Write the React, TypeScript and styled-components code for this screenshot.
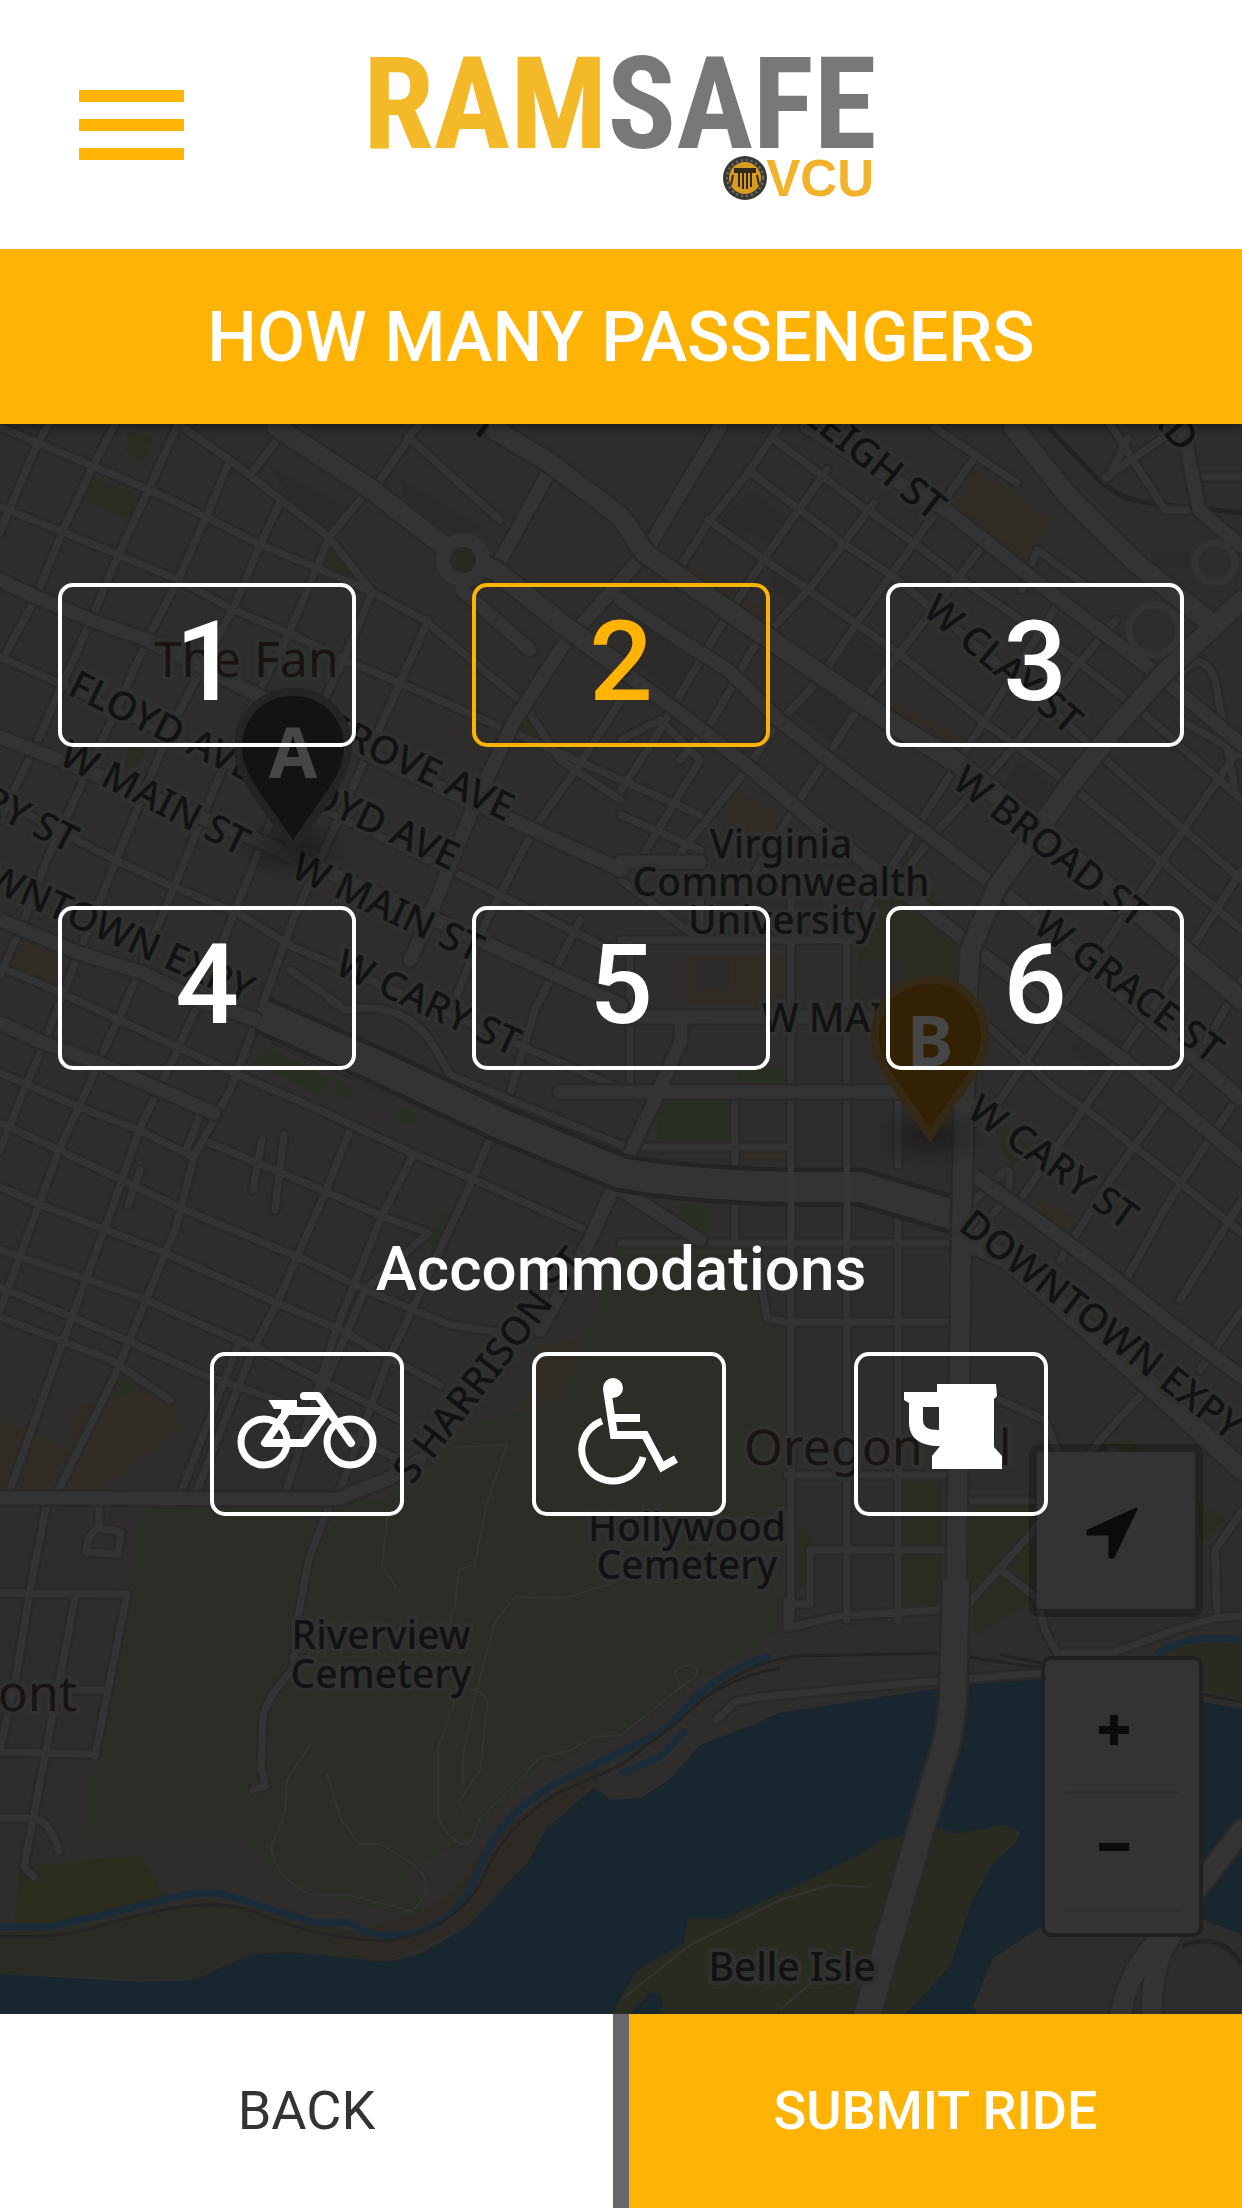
import React, { useState } from "react";
import styled, { createGlobalStyle } from "styled-components";

const amber = "#ffb305";
const sans = `Roboto, "Liberation Sans", sans-serif`;

const GlobalStyle = createGlobalStyle`
  *, *::before, *::after { box-sizing: border-box; }
  body { margin: 0; background: #fff; font-family: ${sans}; }
  button { font-family: inherit; cursor: pointer; }
`;

const Page = styled.div`
  display: flex;
  flex-direction: column;
  min-height: 100vh;
`;

const Header = styled.header`
  position: relative;
  z-index: 2;
  display: grid;
  grid-template-columns: 1fr auto 1fr;
  align-items: center;
  height: 249px;
  padding: 0 79px;
  background: #fff;
`;

const MenuButton = styled.button`
  display: flex;
  flex-direction: column;
  gap: 17px;
  width: 105px;
  padding: 0;
  border: 0;
  background: none;
`;

const MenuBar = styled.span`
  height: 12px;
  background: ${amber};
`;

const LogoArt = styled.svg`
  display: block;
  width: 504px;
  height: 152px;
  overflow: visible;
`;

const Banner = styled.div`
  position: relative;
  z-index: 1;
  display: flex;
  align-items: center;
  justify-content: center;
  height: 175px;
  background: ${amber};
  box-shadow: 0 2px 10px rgba(0, 0, 0, 0.45);
`;

const Title = styled.h1`
  margin: 0;
  color: #fff;
  font-size: 70px;
  font-weight: 500;
  line-height: 80px;
`;

const Main = styled.main`
  position: relative;
  flex: 1;
  padding: 159px 58px 80px;
  background: #2e2d2b;
  overflow: hidden;
`;

const MapLayer = styled.div`
  position: absolute;
  inset: 0;
  display: flex;
  flex-direction: column;
  align-items: flex-end;
  justify-content: flex-end;
  gap: 39px;
  padding: 0 39px 77px;
`;

const MapArt = styled.svg`
  position: absolute;
  inset: 0;
  width: 100%;
  height: 100%;
`;

const LocateButton = styled.button`
  position: relative;
  display: grid;
  place-items: center;
  width: 174px;
  height: 173px;
  padding: 4px 8px 0 0;
  border: 8px solid rgba(0, 0, 0, 0.22);
  border-radius: 10px;
  background: #333 padding-box;
`;

const ZoomGroup = styled.div`
  position: relative;
  display: flex;
  flex-direction: column;
  width: 162px;
  height: 281px;
  padding: 17px 20px;
  border: 4px solid #202020;
  border-radius: 10px;
  background: #333;
`;

const ZoomButton = styled.button`
  display: grid;
  place-items: center;
  height: 117px;
  padding: 0 16px 8px 0;
  border: 0;
  border-bottom: 3px solid #2f2f2f;
  background: none;
`;

const Options = styled.div`
  position: relative;
  display: grid;
  grid-template-columns: repeat(3, 1fr);
  gap: 159px 116px;
`;

const OutlineButton = styled.button<{ $active?: boolean }>`
  display: grid;
  place-items: center;
  height: 164px;
  padding: 0 0 6px;
  border: 4px solid ${(p) => (p.$active ? amber : "#fff")};
  border-radius: 15px;
  background: none;
  color: ${(p) => (p.$active ? amber : "#fff")};
  font-size: 112px;
  font-weight: 500;
  line-height: 120px;
`;

const SectionTitle = styled.h2`
  position: relative;
  margin: 163px 0 47px;
  color: #fff;
  font-size: 62px;
  font-weight: 500;
  line-height: 72px;
  text-align: center;
`;

const Accommodations = styled.div`
  position: relative;
  display: grid;
  grid-template-columns: repeat(3, 194px);
  justify-content: center;
  gap: 128px;
  padding-left: 15px;
`;

const Glyph = styled.svg`
  display: block;
  width: 140px;
  height: 108px;
  fill: none;
  stroke: currentColor;
  stroke-width: 7;
`;

const Footer = styled.footer`
  display: grid;
  grid-template-columns: 1fr 1fr;
  gap: 16px;
  height: 194px;
  background: #66686b;
`;

const FooterButton = styled.button<{ $primary?: boolean }>`
  padding: 0;
  border: 0;
  background: ${(p) => (p.$primary ? amber : "#fff")};
  color: ${(p) => (p.$primary ? "#fff" : "#333")};
  font-size: 54px;
  font-weight: ${(p) => (p.$primary ? 500 : 400)};
  line-height: 64px;
`;

function Logo() {
  return (
    <LogoArt viewBox="0 0 504 152" role="img" aria-label="RamSafe at VCU">
      <text
        x="-6"
        y="99"
        fontFamily="'Roboto Condensed', 'Liberation Sans', sans-serif"
        fontWeight="700"
        fontSize="128"
      >
        <tspan fill="#f3b929">RAM</tspan><tspan fill="#787876">SAFE</tspan>
      </text>
      <circle cx="376" cy="129" r="22" fill="#393935" />
      <circle cx="376" cy="129" r="18" fill="none" stroke="#77736a" strokeWidth="2" strokeDasharray="2 3" />
      <circle cx="376" cy="129" r="16" fill="#d99c22" />
      <path d="M366 120h20v3h-20zM370 124v14M374 124v16M378 124v16M382 124v14M364 126l-2 10M388 126l2 10" stroke="#33291a" strokeWidth="2" fill="#33291a" />
      <text x="505" y="147" textAnchor="end" fill="#f2b22b" fontFamily="'Liberation Sans', sans-serif" fontWeight="700" fontSize="51">VCU</text>
    </LogoArt>
  );
}

const narrowStreets = [
  "M0 427L36 442 95 467 150 490 206 517 261 545 317 568 372 592 424 620 475 663 523 703 560 760 621 800",
  "M0 507L63 532 119 555 178 580 234 610 289 633 345 660 400 683 455 707 507 730 621 780 700 815",
  "M0 657L59 683 240 770 470 880 621 955",
  "M0 800L71 837 115 860 174 887 238 913 293 947 340 967 531 1050 640 1097",
  "M51 420L36 447 12 503 0 533",
  "M115 424L91 470 63 530 36 597 4 657",
  "M178 424L150 487 119 553 91 620 63 683 32 753 0 820",
  "M178 424L230 460 281 500 329 537 372 592",
  "M230 460L206 517 178 580 147 640 115 713 79 790 48 857 20 930 0 975",
  "M277 440L250 475M408 440L372 492M408 437L500 520M408 437L420 424",
  "M281 500L261 543 234 607 202 667 170 730 115 863 79 953 44 1043 20 1100 0 1150",
  "M360 500L329 537 317 567 289 633 253 703 222 770 174 887 140 970 79 1107 59 1150 0 1310",
  "M372 593L345 657 301 747 238 903 200 1000 175 1055 139 1130 115 1200 60 1350 10 1490",
  "M428 620L400 683 356 780 293 920 257 1020 230 1090 194 1157 175 1230 115 1375 55 1497",
  "M621 700L578 767 535 827 487 920 455 1000M580 920L535 1010 511 1090 471 1183 412 1310 388 1360 340 1490",
  "M0 967L55 990 119 1020 234 1073 313 1107 412 1153 475 1180 586 1230",
  "M0 1073L79 1107 139 1130 194 1157M210 1143L329 1193 384 1217 428 1233",
  "M0 1123L59 1150 178 1207 305 1260 366 1290 450 1325 500 1332",
  "M0 1187L36 1203 158 1250 277 1303 341 1330 388 1357 440 1385",
  "M0 1250L139 1297 214 1330 261 1350 400 1420",
  "M0 1287L119 1337 198 1373 277 1400 400 1460",
  "M0 1317L111 1360 170 1400M349 1133L325 1193 277 1303 253 1350 195 1495",
  "M412 1157L380 1220 337 1327 285 1495M240 1340L180 1495M428 1233L365 1290 320 1395M128 1205L140 1170M253 1190L262 1140M275 1210L284 1135M186 1150L200 1115",
  "M779 427L748 473 708 523 680 567M827 470L768 553 712 640 660 730 621 790",
  "M973 460L914 543 859 620 819 680 775 727 744 773 680 853",
  "M985 543L954 583 894 660 855 713 812 780 744 890",
  "M1060 600L985 720 926 813 858 920M1116 620L1076 667 1009 753 938 830 906 870",
  "M874 503L811 587 752 650 713 720 680 760M621 740L660 720 700 760 640 860",
  "M708 520L898 653 985 723 1068 783 1242 930",
  "M748 470L843 543 894 577 1030 690 1150 800 1242 880",
  "M775 440L863 507 914 543 962 580 1040 633 1136 707 1242 800",
  "M934 427L1017 483M1022 590L1037 550 1085 585",
  "M1242 745L1156 870 1060 1010 1000 1100M1242 870L1165 990 1090 1100 1020 1200",
  "M1242 980L1190 1070 1110 1180 1060 1260M1242 1090L1170 1200 1120 1290M1242 1200L1180 1300M1242 1310L1200 1370",
  "M989 1027L1053 1087 1096 1117 1168 1173 1242 1233",
  "M621 815L700 850 700 940M621 880L700 940M621 940H862M630 940V1095M791 900V1620M847 940V1245M898 1100V1165M898 1215V1620M847 1245V1620",
  "M640 1147H791M735 1095V1165M735 1200V1243M621 1243H960M755 1245L767 1318 787 1322H950M787 1475H950M810 1550H945M810 1550V1604H787",
  "M787 1600V1628L839 1616 938 1610M966 1501H1033M1001 1570L1037 1598 1045 1630 1057 1653",
  "M970 1602L1033 1531 1100 1440 1150 1385M1242 1511L1215 1550 1217 1610M1000 1400L1045 1420 1065 1470",
  "M48 1497L30 1590 16 1677 0 1750M127 1594L95 1756M75 1598L48 1740 24 1867 34 1877M0 1593L127 1594M75 1690H105M0 1752L95 1754M0 1818L35 1818Q50 1822 59 1851",
  "M99 1499V1528Q88 1532 86 1552L118 1554 121 1532 99 1528",
  "M329 1507L309 1558 297 1622 293 1669Q265 1700 263 1717L261 1768 266 1786 253 1790",
  "M1041 1673L900 1684 760 1697 735 1702 716 1720M1057 1653L1112 1653 1175 1630 1215 1618 1242 1616",
  "M1110 424L1165 510H1200M1128 438L1108 478M1105 478L1160 440M1200 477H1242M1170 1480L1110 1450",
  "M960 1215L990 1185Q1020 1150 1005 1200L970 1240M1180 720L1242 755M1170 690Q1200 640 1215 680L1235 790",
];

const wideStreets = [
  "M0 580L36 597 91 620 147 640 202 667 253 693 380 760 621 870",
  "M0 737L59 760 257 840 436 920 621 1005",
  "M0 1023L44 1043 99 1063 154 1087 214 1113",
  "M0 920L79 953 143 973 198 1000 257 1020",
  "M562 647L515 720 475 803 428 920 410 960",
  "M621 600L669 633 728 670 779 720 851 777 926 833 1017 903 1242 1100",
  "M621 670L680 713 744 763 819 827 898 887 977 950 1045 1003 1128 1063 1242 1160",
  "M720 427L645 553 562 647",
  "M807 427L950 513 1060 600 1156 673 1242 745",
  "M970 1173L1033 1217 1104 1270 1175 1327 1242 1377",
  "M621 1017H700M706 1017H900M560 1092H905M681 1020V1040L655 1100 621 1170 590 1240 540 1330",
  "M530 650L462 590M495 570L550 470",
  "M1183 427L1199 510 1242 547",
  "M0 1498L337 1499 388 1479 420 1460",
  "M621 862L700 862M621 1190L700 1240",
];

const avenues = [
  "M277 427L372 490 440 543 463 560 495 570 566 627 621 667",
  "M495 430L550 463 621 517 645 553 752 627 819 673 898 727 958 763 1100 880 1242 1000",
  "M1242 600L1164 673 1116 727 1069 787 997 887 970 950 966 1020 962 1200 956 1600",
  "M970 1243L1009 1260 1069 1313 1136 1373 1242 1470",
  "M1013 427L1069 497 1136 563 1207 620",
];

const thinPaths = [
  "M455 1447L507 1445 487 1503 475 1564 459 1570 455 1606 440 1653M388 1510L382 1565 396 1587",
  "M621 1580L566 1598 515 1597 495 1622 475 1697 463 1756 463 1784",
  "M311 1743L287 1780 285 1812 271 1847Q275 1880 313 1895L348 1895 412 1911Q440 1885 412 1863L380 1844 360 1844 341 1820 327 1774",
  "M455 1701L438 1748 438 1816Q452 1848 470 1844L479 1820 523 1776 539 1758 570 1750 594 1737 621 1735 690 1680",
  "M471 1689Q490 1694 487 1710L480 1770 460 1800 463 1812M690 1690Q660 1670 690 1665 710 1672 675 1690",
  "M621 2000L690 1945 780 1900 830 1885 866 1887M780 2010L820 1975",
];

type MapLabel = { t: string; x: number; y: number; r?: number; a?: "start" | "middle" | "end"; place?: boolean };

const labels: MapLabel[] = [
  { t: "FLOYD AVE", x: 66, y: 694, r: 26 },
  { t: "W MAIN ST", x: 57, y: 763, r: 27 },
  { t: "W MAIN ST", x: 289, y: 876, r: 25 },
  { t: "GROVE AVE", x: 506, y: 822, r: 25, a: "end" },
  { t: "FLOYD AVE", x: 451, y: 871, r: 25, a: "end" },
  { t: "W CARY ST", x: 69, y: 854, r: 27, a: "end" },
  { t: "DOWNTOWN EXPY", x: 246, y: 1004, r: 24, a: "end" },
  { t: "W CARY ST", x: 333, y: 973, r: 25 },
  { t: "LEIGH ST", x: 932, y: 522, r: 38, a: "end" },
  { t: "W CLAY ST", x: 921, y: 613, r: 40 },
  { t: "W BROAD ST", x: 950, y: 785, r: 38 },
  { t: "W GRACE ST", x: 1031, y: 930, r: 37 },
  { t: "W CARY ST", x: 965, y: 1115, r: 36 },
  { t: "DOWNTOWN EXPY", x: 957, y: 1229, r: 38 },
  { t: "S HARRISON ST", x: 412, y: 1486, r: -52 },
  { t: "W MAIN ST", x: 762, y: 1032 },
  { t: "RD", x: 1180, y: 454, r: 50, a: "end" },
  { t: "Virginia", x: 781, y: 858, a: "middle" },
  { t: "Commonwealth", x: 781, y: 896, a: "middle" },
  { t: "University", x: 782, y: 934, a: "middle" },
  { t: "Riverview", x: 381, y: 1649, a: "middle" },
  { t: "Cemetery", x: 381, y: 1688, a: "middle" },
  { t: "Hollywood", x: 687, y: 1541, a: "middle" },
  { t: "Cemetery", x: 687, y: 1579, a: "middle" },
  { t: "Belle Isle", x: 792, y: 1981, a: "middle" },
  { t: "The Fan", x: 154, y: 677, place: true },
  { t: "Oregon Hill", x: 744, y: 1465, place: true },
  { t: "ont", x: 77, y: 1711, a: "end", place: true },
];

function Roads({ paths, width, butt }: { paths: string[]; width: number; butt?: boolean }) {
  const d = paths.join("");
  return (
    <g fill="none" strokeLinejoin="round" strokeLinecap={butt ? "butt" : "round"}>
      <path d={d} stroke="#2a2927" strokeWidth={width + 5} />
      <path d={d} stroke="#333" strokeWidth={width} />
    </g>
  );
}

function Pin({ x, y, letter, fill, ring }: { x: number; y: number; letter: string; fill: string; ring: string }) {
  return (
    <g transform={`translate(${x} ${y})`}>
      <ellipse cx="0" cy="160" rx="58" ry="34" fill="url(#pinShadow)" />
      <path d="M0 4C-32 4-55 28-55 60C-55 90-30 112 0 160C30 112 55 90 55 60C55 28 32 4 0 4Z" fill={fill} stroke={ring} strokeWidth="8" />
      <text y="90" textAnchor="middle" fill="#464646" fontFamily="'Noto Sans', sans-serif" fontWeight="700" fontSize="70">{letter}</text>
    </g>
  );
}

function CityMap() {
  return (
    <MapArt viewBox="0 424 1242 1590" preserveAspectRatio="xMidYMid slice" aria-hidden="true">
      <defs>
        <radialGradient id="pinShadow">
          <stop offset="0" stopColor="#000" stopOpacity="0.35" />
          <stop offset="1" stopColor="#000" stopOpacity="0" />
        </radialGradient>
      </defs>
      <rect y="424" width="1242" height="1590" fill="#2e2d2b" />
      <g fill="#2a2c21">
        <path d="M128 430L152 438 142 462 126 452ZM92 475L145 500 132 520 84 500ZM330 550L372 587 322 565ZM130 745L145 750 135 772 124 768ZM525 715L545 740 520 730Z" />
        <path d="M860 925L905 850 970 950 965 1000 855 1010Z" />
        <path d="M966 1506H1036V1600L975 1636ZM787 1530H810V1590H787ZM900 1480H942V1605H900ZM1198 1500L1225 1520 1200 1545ZM1095 1445L1130 1440 1150 1460 1100 1460ZM985 1110L1035 1150 1010 1165Z" />
        <path d="M20 1868L140 1855 168 1900 60 1922 15 1922Z" fill="#2b2c1c" />
      </g>
      <g fill="#282e24">
        <path d="M262 1045L330 1080 322 1098 256 1062ZM336 1080L354 1088 348 1100 332 1092ZM400 1108L420 1114 412 1125 396 1118ZM658 1097H730V1140H658ZM738 1066H784V1082H738ZM680 1205L708 1208V1232L680 1222ZM105 1390L130 1375 155 1400 130 1420 105 1405Z" />
        <path d="M443 1210L460 1216 438 1255 428 1248Z" />
      </g>
      <g fill="#302c25">
        <path d="M22 930L55 945 50 985 12 965ZM973 468L1052 520 1022 560 955 510ZM680 560L765 610 750 625 690 590ZM850 645L872 660 845 690 828 672ZM735 790L790 820 770 850 725 820ZM685 955H785V1005H685ZM80 1405L165 1385 180 1430 100 1490 60 1490ZM0 1420L70 1450 45 1495H0ZM740 1148H788V1160H740ZM880 1020H910V1060H880ZM1040 1200L1075 1215 1060 1235 1030 1215ZM890 700L968 740 940 770 900 735Z" />
        <path d="M540 1345L630 1330 640 1410 520 1420Z" />
      </g>
      <g fill="#2b2a28">
        <path d="M270 465L350 510 330 535 290 500ZM400 480L480 525 460 545 410 515ZM752 490L790 520 770 545 720 520ZM780 560L820 590 800 610 770 585ZM630 620L700 660 680 700 630 660ZM850 630L890 660 830 740 790 710ZM700 960H730V990H700ZM860 960H900V1000H860ZM1020 760L1060 790 1040 815 1000 790ZM1090 1020L1130 1050 1100 1080 1070 1050ZM1150 550H1190V568H1150Z" />
      </g>
      <path d="M143 1507L385 1500 470 1425 560 1400 621 1243 755 1245 767 1322 787 1325 780 1630 700 1680 621 1735 540 1770 480 1830 410 1870 425 1915 380 1910 280 1880 240 1840 80 1840Z" fill="#2b2d27" />
      <path d="M0 1932Q80 1934 198 1900 260 1905 388 1942 450 1930 480 1880 520 1800 600 1770L594 1788 527 1863 467 1927 386 1962 253 1954 194 1980 0 1974Z" fill="#2b2b25" />
      <path d="M400 1918Q460 1900 480 1850L500 1830 600 1760 594 1788 527 1863 467 1927 386 1962 310 1945Z" fill="#2d2a26" />
      <path d="M0 1974L139 1982 194 1980 253 1954 289 1952 386 1962 420 1954 467 1927 527 1863 547 1828 594 1788 612 1800 640 1798 669 1780 700 1745 752 1725 779 1713 934 1689 1041 1673 1242 1709V1935L1203 1919 1041 1927 993 1958 973 2006 977 2014H0Z" fill="#18262f" />
      <path d="M612 2014L637 1970 684 1943 688 1919 724 1919 795 1887 859 1855 882 1840 942 1828 954 1834 1005 1825 1020 1832 1017 1842 993 1863 973 1899 950 1966 914 2006 904 2014H660Q668 1990 650 1993L630 2014Z" fill="#2a2b20" />
      <path d="M1170 1650Q1210 1638 1242 1645V1700L1203 1690Z" fill="#292b20" />
      <g fill="none" stroke="#1a2c3a" strokeWidth="7">
        <path d="M0 1927H48L103 1915 158 1901Q205 1888 230 1896L277 1911 317 1923 348 1922 364 1931Q390 1940 420 1931 451 1922 471 1887L491 1844Q505 1815 554 1784L621 1752 661 1733 700 1693Q740 1662 771 1657M621 1774L661 1756 686 1730M1156 1655Q1190 1632 1242 1640" />
      </g>
      <g fill="none" stroke="#242322" strokeWidth="3">
        <path d="M0 1936Q60 1940 103 1925 200 1895 250 1910 320 1940 388 1941 450 1930 480 1885 500 1830 554 1795L621 1765 680 1720Q740 1660 800 1656L940 1653 1041 1668M1000 1655L1242 1702M700 1700Q740 1675 780 1668" />
        <path d="M1048 427L1096 477Q1120 500 1148 503L1242 513M1182 1946Q1220 1930 1242 1965" strokeWidth="5" />
      </g>
      <g fill="none" stroke="#333431" strokeWidth="2"><path d={thinPaths.join("")} /></g>
      <Roads paths={narrowStreets} width={7} />
      <Roads paths={wideStreets} width={13} />
      <Roads paths={["M277 1040L380 1085 470 1120M330 1000L345 1010Q400 1000 430 1040L450 1075 621 1145M290 970L340 1005"]} width={7} />
      <g fill="none" strokeLinejoin="round">
        <path d="M262 1015L380 1067 499 1123 621 1173Q680 1184 780 1187H860L960 1217" stroke="#252422" strokeWidth="39" />
        <path d="M262 1015L380 1067 499 1123 621 1173Q680 1184 780 1187H860L960 1217" stroke="#333" strokeWidth="30" />
      </g>
      <Roads paths={avenues} width={19} />
      <Roads paths={["M956 1580L953 1700Q950 1740 935 1780L860 2040"]} width={26} butt />
      <Roads paths={["M1242 1830L1150 1950Q1125 1980 1120 2020M1175 1930Q1150 1960 1152 2020"]} width={20} />
      <path d="M791 1165V1245M847 1165V1245" stroke="#363635" strokeWidth="6" />
      <circle cx="463" cy="560" r="20" fill="none" stroke="#333" strokeWidth="14" />
      <circle cx="463" cy="560" r="13" fill="#292b21" />
      <circle cx="1154" cy="630" r="25" fill="none" stroke="#333" strokeWidth="7" />
      <circle cx="1215" cy="563" r="20" fill="none" stroke="#333" strokeWidth="7" />
      <path d="M487 424L478 436" stroke="#121212" strokeWidth="5" />
      <g fontFamily="'Noto Sans', sans-serif" paintOrder="stroke" stroke="#30302e" strokeWidth="8" strokeLinejoin="round">
        {labels.map((l, i) => (
          <text
            key={i}
            textAnchor={l.a ?? "start"}
            transform={`translate(${l.x} ${l.y}) rotate(${l.r ?? 0})`}
            fontSize={l.place ? 50 : 39}
            fontWeight={l.place ? 400 : 500}
            fill={l.place ? "#191411" : "#121212"}
          >
            {l.t}
          </text>
        ))}
      </g>
      <Pin x={293} y={688} letter="A" fill="#131313" ring="#242424" />
      <Pin x={930} y={976} letter="B" fill="#322105" ring="#352814" />
    </MapArt>
  );
}

const BikeIcon = () => (
  <Glyph viewBox="0 0 140 108" aria-hidden="true">
    <circle cx="27" cy="65" r="23" />
    <circle cx="113" cy="65" r="23" />
    <path d="M35 25H58V30H38Z" strokeWidth="4" fill="currentColor" />
    <path d="M54 28L50 34 28 66H68L91 34H48" strokeWidth="8" strokeLinecap="round" strokeLinejoin="round" />
    <path d="M67 19H81L114 66" strokeWidth="8" strokeLinecap="round" strokeLinejoin="round" />
  </Glyph>
);

const WheelchairIcon = () => (
  <Glyph viewBox="0 0 140 108" aria-hidden="true">
    <circle cx="54" cy="11" r="10" fill="currentColor" stroke="none" />
    <path d="M48 12L55 58H86L103 90 117 82" strokeWidth="8" />
    <path d="M54 41H81" strokeWidth="8" />
    <path d="M43 44A31 31 0 1 0 84 80" />
  </Glyph>
);

const MugIcon = () => (
  <Glyph viewBox="0 0 140 108" aria-hidden="true">
    <path
      d="M56 7H115L116 19 113 22V70L121 79V92H51V79L59 69C39 69 28 61 28 45V26L23 23V15H56ZM42 30V43C42 50 47 53 58 53V30Z"
      fill="currentColor"
      fillRule="evenodd"
      stroke="none"
    />
  </Glyph>
);

const accommodationOptions = [
  { name: "Bicycle", Icon: BikeIcon },
  { name: "Wheelchair", Icon: WheelchairIcon },
  { name: "Cargo", Icon: MugIcon },
];

export default function App() {
  const [passengers, setPassengers] = useState(2);
  const [needs, setNeeds] = useState<string[]>([]);
  const toggle = (name: string) =>
    setNeeds((n) => (n.includes(name) ? n.filter((v) => v !== name) : [...n, name]));

  return (
    <Page>
      <GlobalStyle />
      <Header>
        <MenuButton type="button" aria-label="Menu">
          <MenuBar />
          <MenuBar />
          <MenuBar />
        </MenuButton>
        <Logo />
      </Header>
      <Banner>
        <Title>HOW MANY PASSENGERS</Title>
      </Banner>
      <Main>
        <MapLayer>
          <CityMap />
          <LocateButton type="button" aria-label="Locate me">
            <svg width="52" height="52" viewBox="0 0 52 52">
              <path d="M50 2L27 50H24V27H2V24Z" fill="#0b0b0b" stroke="#0b0b0b" strokeWidth="3" strokeLinejoin="round" />
            </svg>
          </LocateButton>
          <ZoomGroup>
            <ZoomButton type="button" aria-label="Zoom in">
              <svg width="32" height="32" viewBox="0 0 32 32"><path d="M1 16H31M16 1V31" stroke="#0b0b0b" strokeWidth="8" /></svg>
            </ZoomButton>
            <ZoomButton type="button" aria-label="Zoom out">
              <svg width="32" height="32" viewBox="0 0 32 32"><path d="M1 16H31" stroke="#0b0b0b" strokeWidth="8" /></svg>
            </ZoomButton>
          </ZoomGroup>
        </MapLayer>
        <Options>
          {[1, 2, 3, 4, 5, 6].map((n) => (
            <OutlineButton key={n} type="button" $active={n === passengers} aria-pressed={n === passengers} onClick={() => setPassengers(n)}>
              {n}
            </OutlineButton>
          ))}
        </Options>
        <SectionTitle>Accommodations</SectionTitle>
        <Accommodations>
          {accommodationOptions.map(({ name, Icon }) => (
            <OutlineButton key={name} type="button" aria-label={name} $active={needs.includes(name)} aria-pressed={needs.includes(name)} onClick={() => toggle(name)}>
              <Icon />
            </OutlineButton>
          ))}
        </Accommodations>
      </Main>
      <Footer>
        <FooterButton type="button">BACK</FooterButton>
        <FooterButton type="button" $primary>SUBMIT RIDE</FooterButton>
      </Footer>
    </Page>
  );
}
